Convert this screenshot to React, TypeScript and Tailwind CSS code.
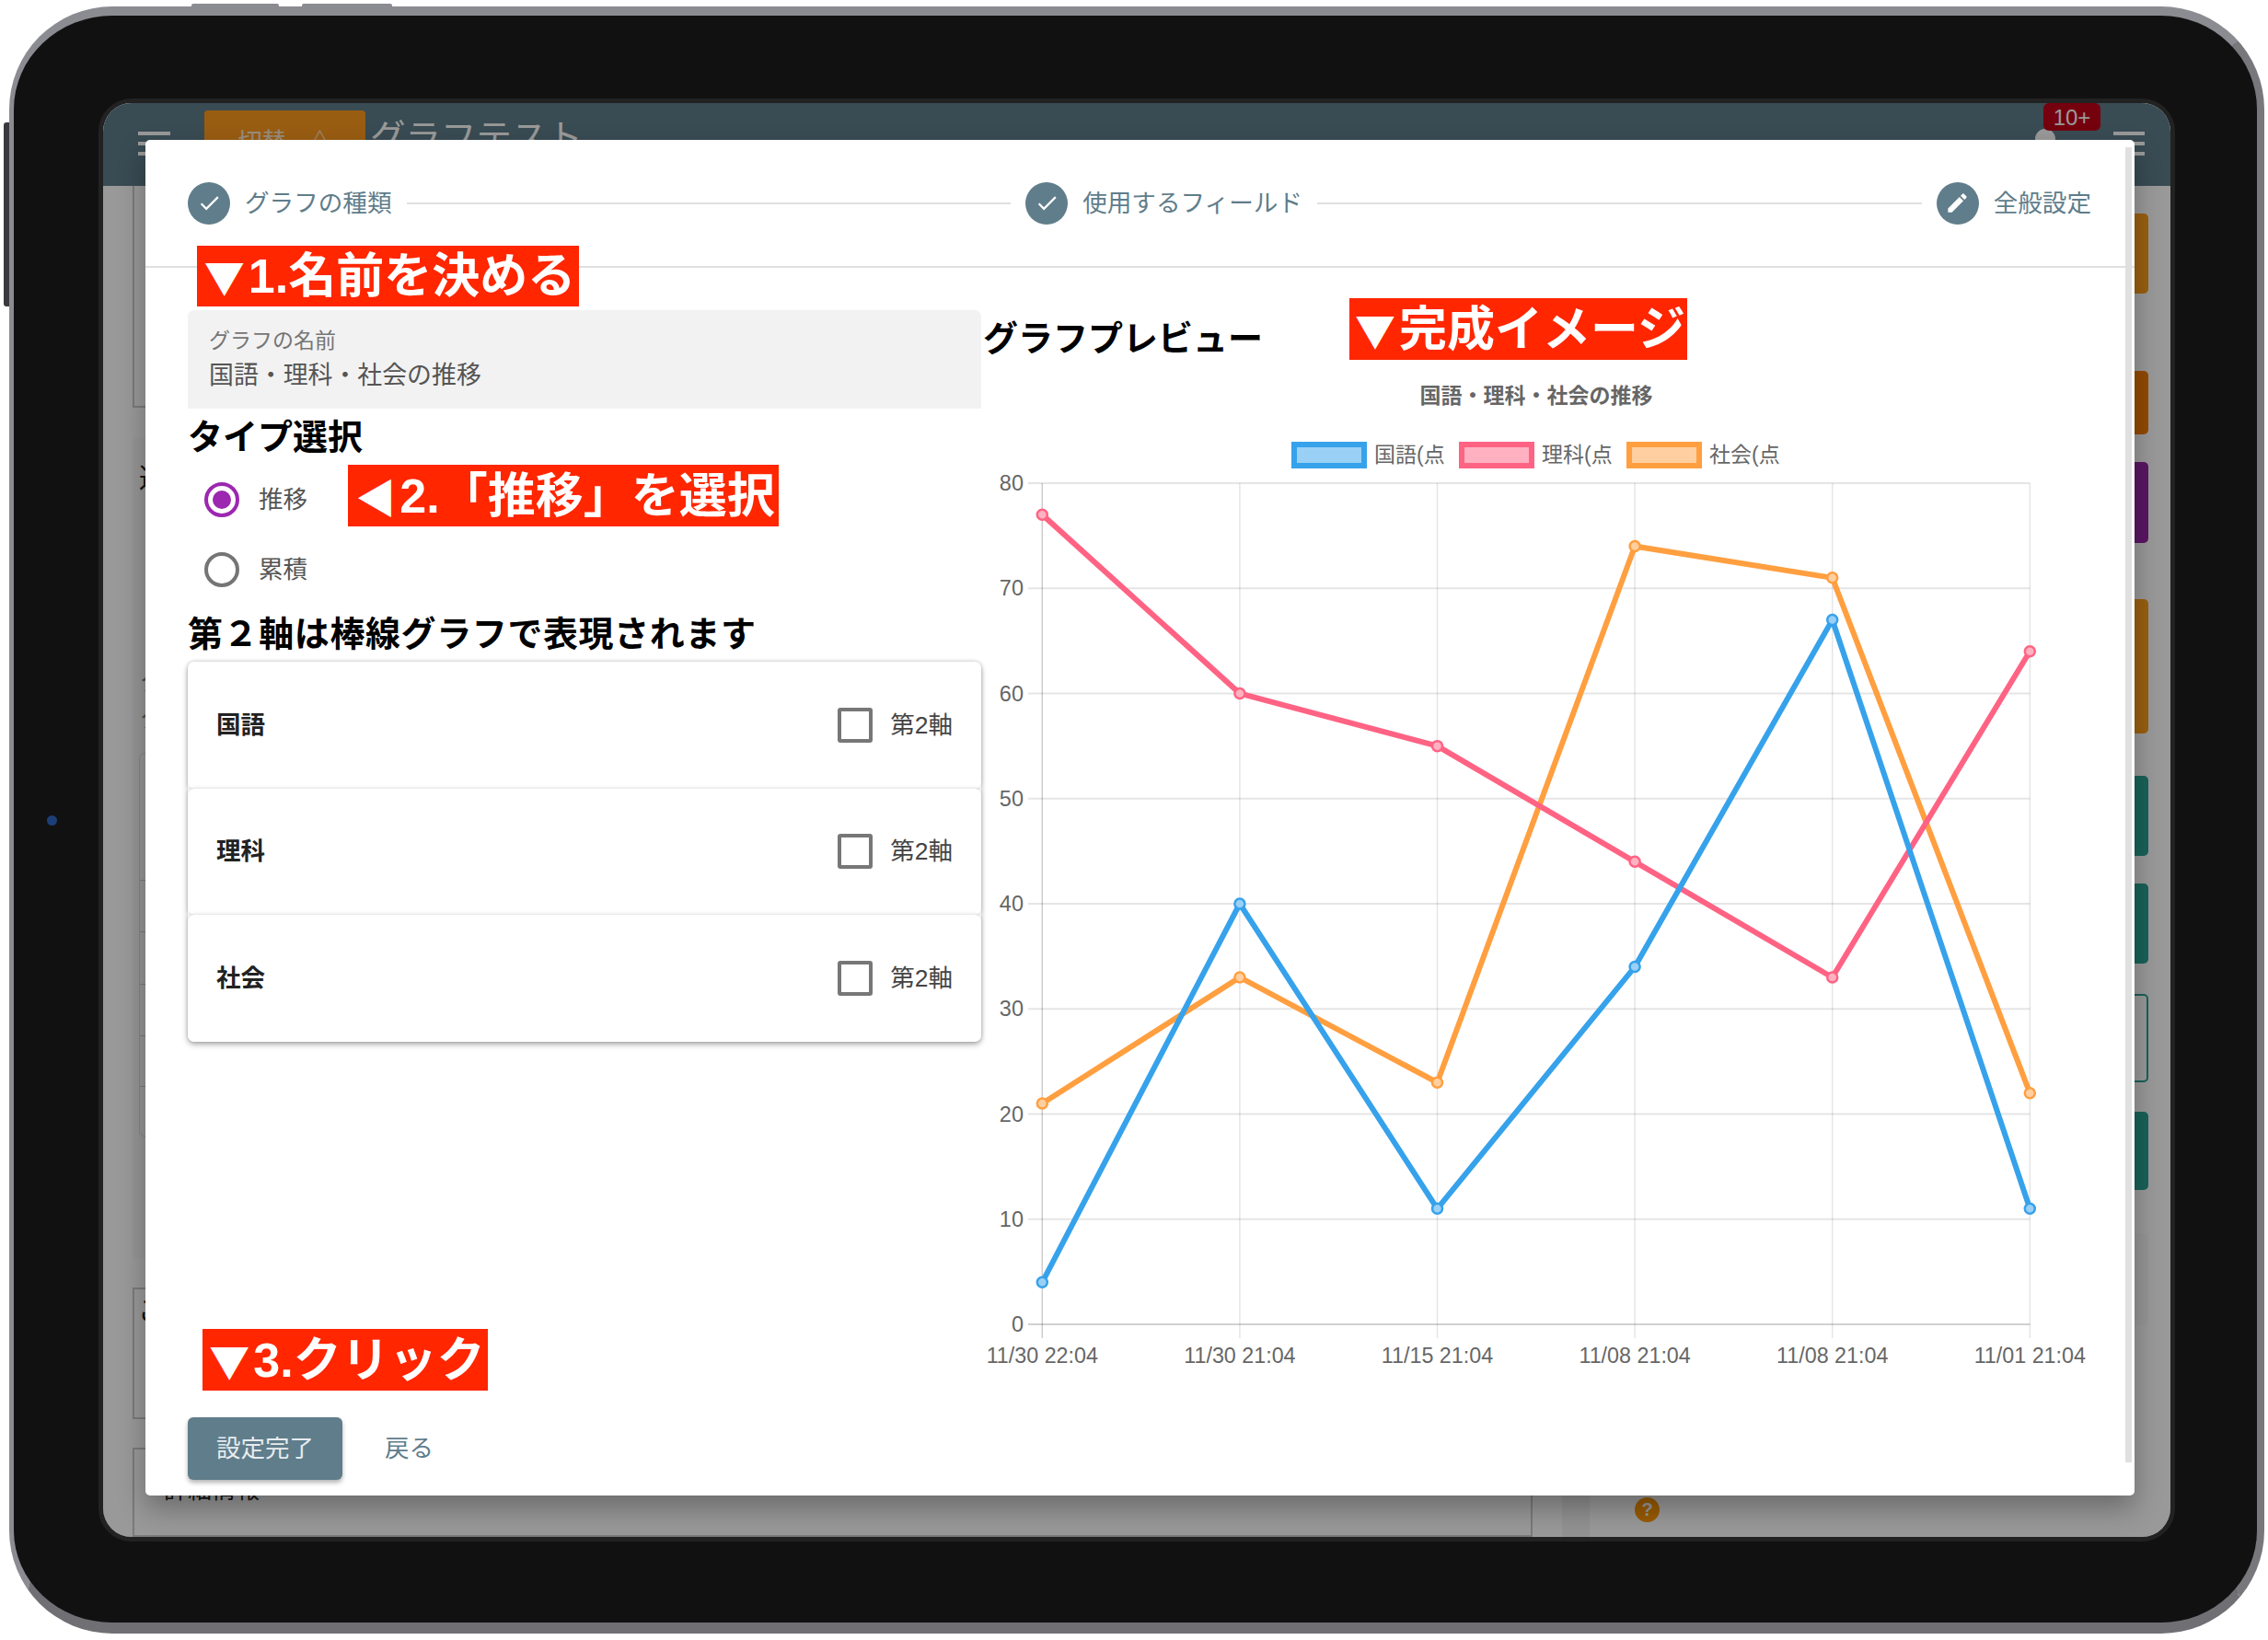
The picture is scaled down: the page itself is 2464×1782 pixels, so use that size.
import { Fragment } from "react";

const LABELS = ["11/30 22:04", "11/30 21:04", "11/15 21:04", "11/08 21:04", "11/08 21:04", "11/01 21:04"];
const SERIES = [
  { name: "社会(点", color: "#ff9f40", soft: "#ffcfa0", legendX: 1767, data: [21, 33, 23, 74, 71, 22] },
  { name: "理科(点", color: "#ff6384", soft: "#ffb1c1", legendX: 1585, data: [77, 60, 55, 44, 33, 64] },
  { name: "国語(点", color: "#36a2eb", soft: "#9ad0f5", legendX: 1403, data: [4, 40, 11, 34, 67, 11] },
];
const TICKS = [0, 10, 20, 30, 40, 50, 60, 70, 80];
const CARDS = ["国語", "理科", "社会"];
const SIDE_TABS = [
  "mt-[30px] h-[87px] bg-[#ffa019]",
  "mt-[84px] h-[69px] bg-[#f57c00]",
  "mt-[30px] h-[88px] bg-[#9626a5]",
  "mt-[61px] h-[146px] bg-[#ffa019]",
  "mt-[46px] h-[87px] bg-[#2ba394]",
  "mt-[30px] h-[87px] bg-[#2ba394]",
  "mt-[33px] h-[96px] border-2 border-[#2ba394]",
  "mt-[32px] h-[85px] bg-[#2ba394]",
  "mt-[47px] h-[100px] bg-[#fafafa]",
];

const xAt = (i: number) => 1132.3 + i * 214.6;
const yAt = (v: number) => 1439 - v * 11.425;

function HamburgerIcon({ className }: { className: string }) {
  return (
    <div className={`flex flex-col gap-[7px] ${className}`}>
      <div className="h-[4px] w-full bg-white" />
      <div className="h-[4px] w-full bg-white" />
      <div className="h-[4px] w-full bg-white" />
    </div>
  );
}

function Step({ label, edit }: { label: string; edit?: boolean }) {
  return (
    <div className="flex items-center gap-[16px] shrink-0">
      <div className="w-[46px] h-[46px] rounded-full bg-[#607d8b] flex items-center justify-center">
        <svg viewBox="0 0 24 24" className="w-[27px] h-[27px]" fill="#fff">
          {edit ? (
            <path d="M3 17.25V21h3.75L17.81 9.94l-3.75-3.75L3 17.25zM20.71 7.04c.39-.39.39-1.02 0-1.41l-2.34-2.34c-.39-.39-1.02-.39-1.41 0l-1.83 1.83 3.75 3.75 1.83-1.83z" />
          ) : (
            <path d="M9 16.17L4.83 12l-1.41 1.41L9 19 21 7l-1.41-1.41z" />
          )}
        </svg>
      </div>
      <span className="text-[26.6px] leading-[40px] text-[#607d8b]">{label}</span>
    </div>
  );
}

function Note({ mark, text, className }: { mark: string; text: string; className: string }) {
  return (
    <div
      className={`absolute flex items-center justify-center whitespace-nowrap bg-[#ff2600] text-[52px] font-bold leading-none text-white ${className}`}>
      <span className="w-[52px] shrink-0 text-center text-[44px] font-['Noto_Sans_CJK_JP',sans-serif]">{mark}</span>
      <span className="shrink-0">{text}</span>
    </div>
  );
}

function Chart() {
  return (
    <svg viewBox="1068 400 1240 1100" className="w-[1240px] h-[1100px] block" fontFamily="'Liberation Sans','Noto Sans CJK JP',sans-serif">
      <text x="1669" y="438" textAnchor="middle" fontSize="23" fontWeight="700" fill="#666">
        国語・理科・社会の推移
      </text>

      {[...SERIES].reverse().map((s) => (
        <Fragment key={s.name}>
          <rect x={s.legendX + 3} y={483} width={76} height={23} fill={s.soft} stroke={s.color} strokeWidth={6} />
          <text x={s.legendX + 90} y={502} fontSize="23" fill="#666">
            {s.name}
          </text>
        </Fragment>
      ))}

      {TICKS.map((t) => (
        <Fragment key={t}>
          <line x1={1117} x2={xAt(5)} y1={yAt(t)} y2={yAt(t)} stroke="#000" strokeOpacity={t === 0 ? 0.18 : 0.1} strokeWidth={2} />
          <text x={1112} y={yAt(t) + 8} textAnchor="end" fontSize="23.5" fill="#666">
            {t}
          </text>
        </Fragment>
      ))}

      {LABELS.map((label, i) => (
        <Fragment key={i}>
          <line x1={xAt(i)} x2={xAt(i)} y1={525} y2={1454} stroke="#000" strokeOpacity={i === 0 ? 0.2 : 0.1} strokeWidth={1.5} />
          <text x={xAt(i)} y={1481} textAnchor="middle" fontSize="23.3" fill="#666">
            {label}
          </text>
        </Fragment>
      ))}

      {SERIES.map((s) => (
        <Fragment key={s.name}>
          <polyline
            points={s.data.map((v, i) => `${xAt(i)},${yAt(v)}`).join(" ")}
            fill="none"
            stroke={s.color}
            strokeWidth={6}
          />
          {s.data.map((v, i) => (
            <circle key={i} cx={xAt(i)} cy={yAt(v)} r={5.5} fill={s.soft} stroke={s.color} strokeWidth={2.5} />
          ))}
        </Fragment>
      ))}
    </svg>
  );
}

function Modal() {
  return (
    <div className="absolute left-[46px] top-[40px] w-[2161px] h-[1473px] bg-white rounded-[5px] shadow-[0_14px_30px_rgba(0,0,0,0.3)] flex flex-col">
      {/* Stepper */}
      <div className="h-[139px] shrink-0 border-b-2 border-[#e0e0e0] pl-[46px] pr-[47px] flex items-center">
        <Step label="グラフの種類" />
        <div className="flex-1 h-[2px] mx-[16px] bg-[#e0e0e0]" />
        <Step label="使用するフィールド" />
        <div className="flex-1 h-[2px] mx-[16px] bg-[#e0e0e0]" />
        <Step label="全般設定" edit />
      </div>

      <div className="flex-1 flex pl-[46px] min-h-0">
        {/* Left column */}
        <div className="w-[862px] shrink-0 flex flex-col pt-[46px] pb-[17px]">
          <div className="h-[107px] bg-[#f2f2f2] rounded-t-[7px] pl-[23px] pt-[18px]">
            <div className="text-[23px] leading-[30px] text-[#757575]">グラフの名前</div>
            <div className="mt-[5px] text-[26.9px] leading-[36px] text-[#555]">国語・理科・社会の推移</div>
          </div>

          <h2 className="mt-[9px] text-[38px] leading-[44px] font-bold text-black">タイプ選択</h2>

          <div className="mt-[8px]">
            <div className="h-[76px] pl-[18px] flex items-center gap-[21px]">
              <div className="w-[38px] h-[38px] rounded-full border-[4px] border-[#9c27b0] flex items-center justify-center">
                <div className="w-[20px] h-[20px] rounded-full bg-[#9c27b0]" />
              </div>
              <span className="pt-[2px] text-[26.5px] text-[#555]">推移</span>
            </div>
            <div className="h-[76px] pl-[18px] flex items-center gap-[21px]">
              <div className="w-[38px] h-[38px] rounded-full border-[4px] border-[#757575]" />
              <span className="pt-[2px] text-[26.5px] text-[#555]">累積</span>
            </div>
          </div>

          <h2 className="mt-[10px] text-[38px] leading-[44px] font-bold tracking-[0.6px] text-black">第２軸は棒線グラフで表現されます</h2>

          <div className="mt-[8px] rounded-[7px] shadow-[0_3px_6px_rgba(0,0,0,0.3)]">
            {CARDS.map((card) => (
              <div
                key={card}
                className="h-[137.5px] rounded-[7px] bg-white shadow-[0_0_4px_rgba(0,0,0,0.2)] pl-[31px] pr-[31px] flex items-center justify-between">
                <span className="pt-[2px] text-[26.5px] font-bold text-[#222]">{card}</span>
                <div className="flex items-center gap-[19px]">
                  <div className="w-[38px] h-[38px] rounded-[3px] border-[4px] border-[#777]" />
                  <span className="pt-[2px] text-[26.5px] text-[#444]">第2軸</span>
                </div>
              </div>
            ))}
          </div>

          <div className="mt-auto flex items-center gap-[46px]">
            <button className="w-[168px] h-[68px] pt-[2px] rounded-[6px] bg-[#607d8b] text-[26.5px] text-[#e6ecef] shadow-[0_3px_5px_rgba(0,0,0,0.3)]">
              設定完了
            </button>
            <span className="pt-[2px] text-[26.5px] text-[#607d8b]">戻る</span>
          </div>
        </div>

        {/* Right column */}
        <div className="ml-[2px] flex-1 min-w-0">
          <h2 className="pt-[55px] h-[109px] text-[38px] leading-[44px] font-bold text-black">グラフプレビュー</h2>
          <Chart />
        </div>
      </div>

      <div className="absolute right-[3px] top-[8px] w-[7px] h-[1429px] bg-[#e0e0e0]" />

      <Note mark="▼" text="1.名前を決める" className="left-[56px] top-[115px] w-[415px] h-[66px]" />
      <Note mark="◀" text="2.「推移」を選択" className="left-[220px] top-[353px] w-[468px] h-[67px]" />
      <Note mark="▼" text="完成イメージ" className="left-[1308px] top-[172px] w-[367px] h-[67px]" />
      <Note mark="▼" text="3.クリック" className="left-[62px] top-[1292px] w-[310px] h-[67px]" />
    </div>
  );
}

function PageBehind() {
  return (
    <div className="absolute inset-0 flex flex-col bg-white">
      <div className="h-[90px] shrink-0 bg-[#607d8b] flex items-start pl-[38px] pr-[28px] text-white">
        <HamburgerIcon className="mt-[31px] w-[35px]" />
        <div className="ml-[37px] mt-[8px] w-[175px] h-[80px] rounded-t-[4px] bg-[#ff9b1e] flex justify-center gap-[24px] pt-[16px] text-[26px] leading-[36px] text-white/80">
          <span>切替</span>
          <span>△</span>
        </div>
        <div className="ml-[5px] mt-[8px] text-[38.5px] leading-[60px]">グラフテスト</div>
        <div className="ml-auto relative w-[70px] h-[60px] mr-[15px]">
          <div className="absolute left-0 top-[28px] w-[22px] h-[22px] rounded-full bg-white" />
          <div className="absolute left-[9px] top-0 w-[62px] h-[30px] rounded-[6px] bg-[#c40018] text-[24px] leading-[31px] text-center">
            10+
          </div>
        </div>
        <HamburgerIcon className="mt-[31px] w-[34px]" />
      </div>

      <div className="flex-1 flex min-h-0 overflow-hidden text-[#222]">
        <div className="ml-[32px] w-[1521px] shrink-0 flex flex-col">
          <div className="h-[241px] shrink-0 border-l-2 border-b-2 border-[#ccc]" />
          <div className="mt-[32px] h-[893px] shrink-0 bg-[#fbfbfb] pl-[7px] pt-[25px] text-[30px] leading-[40px]">
            <div>選</div>
            <div className="mt-[180px] text-[#888]">ク</div>
            <div className="text-[#888]">ク</div>
            <div className="mt-[18px] h-[417px] rounded-[6px] border border-[#ddd] flex flex-col">
              <div className="h-[138px] border-b border-[#ccc]" />
              <div className="h-[56px] border-b border-[#ccc]" />
              <div className="h-[57px] border-b border-[#ccc]" />
              <div className="h-[56px] border-b border-[#ccc]" />
              <div className="h-[55px] border-b border-[#ccc]" />
            </div>
          </div>
          <div className="mt-[31px] h-[143px] shrink-0 border-2 border-[#ccc] pl-[4px] pt-[3px] text-[30px] leading-[40px]">ご</div>
          <div className="mt-[31px] flex-1 border-2 border-[#ccc] pl-[32px] pt-[29px] text-[26px] leading-[30px]">詳細情報</div>
        </div>
        <div className="ml-[32px] w-[30px] shrink-0 bg-[#f4f4f4]" />
        <div className="flex-1 pr-[24px] flex flex-col items-end">
          {SIDE_TABS.map((tab) => (
            <div key={tab} className={`w-[100px] shrink-0 rounded-[5px] ${tab}`} />
          ))}
        </div>
      </div>

      <div className="absolute left-[1664px] bottom-[16px] w-[27px] h-[27px] rounded-full bg-[#ff9800] text-center text-[20px] leading-[27px] font-bold text-white">
        ?
      </div>
      <div className="absolute inset-0 bg-black/40" />
    </div>
  );
}

export default function App() {
  return (
    <div className="w-[2464px] h-[1782px] bg-white pl-[10px] pt-[7px] font-['Liberation_Sans','Noto_Sans_CJK_JP',sans-serif]">
      <div className="relative w-[2450px] h-[1768px] rounded-[112px] border-t-[10px] border-l-[5px] border-r-[8px] border-b-[12px] border-t-[#8b8b92] border-l-[#8b8b92] border-r-[#77777c] border-b-[#6f6f74] bg-[#111] pl-[92px] pt-[90px]">
        {/* Side buttons */}
        <div className="absolute left-[193px] -top-[13px] w-[95px] h-[4px] rounded-t-[2px] bg-[#8b8b92]" />
        <div className="absolute left-[313px] -top-[13px] w-[98px] h-[4px] rounded-t-[2px] bg-[#8b8b92]" />
        <div className="absolute -left-[11px] top-[116px] w-[6px] h-[200px] rounded-l-[3px] bg-[#3a3a3e]" />
        {/* Camera */}
        <div className="absolute left-[36px] top-[869px] w-[11px] h-[11px] rounded-full bg-[#1c3f78]" />

        <div className="w-[2256px] h-[1568px] rounded-[36px] border-[5px] border-[#222]">
          <div className="relative w-full h-full rounded-[31px] overflow-hidden">
            <PageBehind />
            <Modal />
          </div>
        </div>
      </div>
    </div>
  );
}
